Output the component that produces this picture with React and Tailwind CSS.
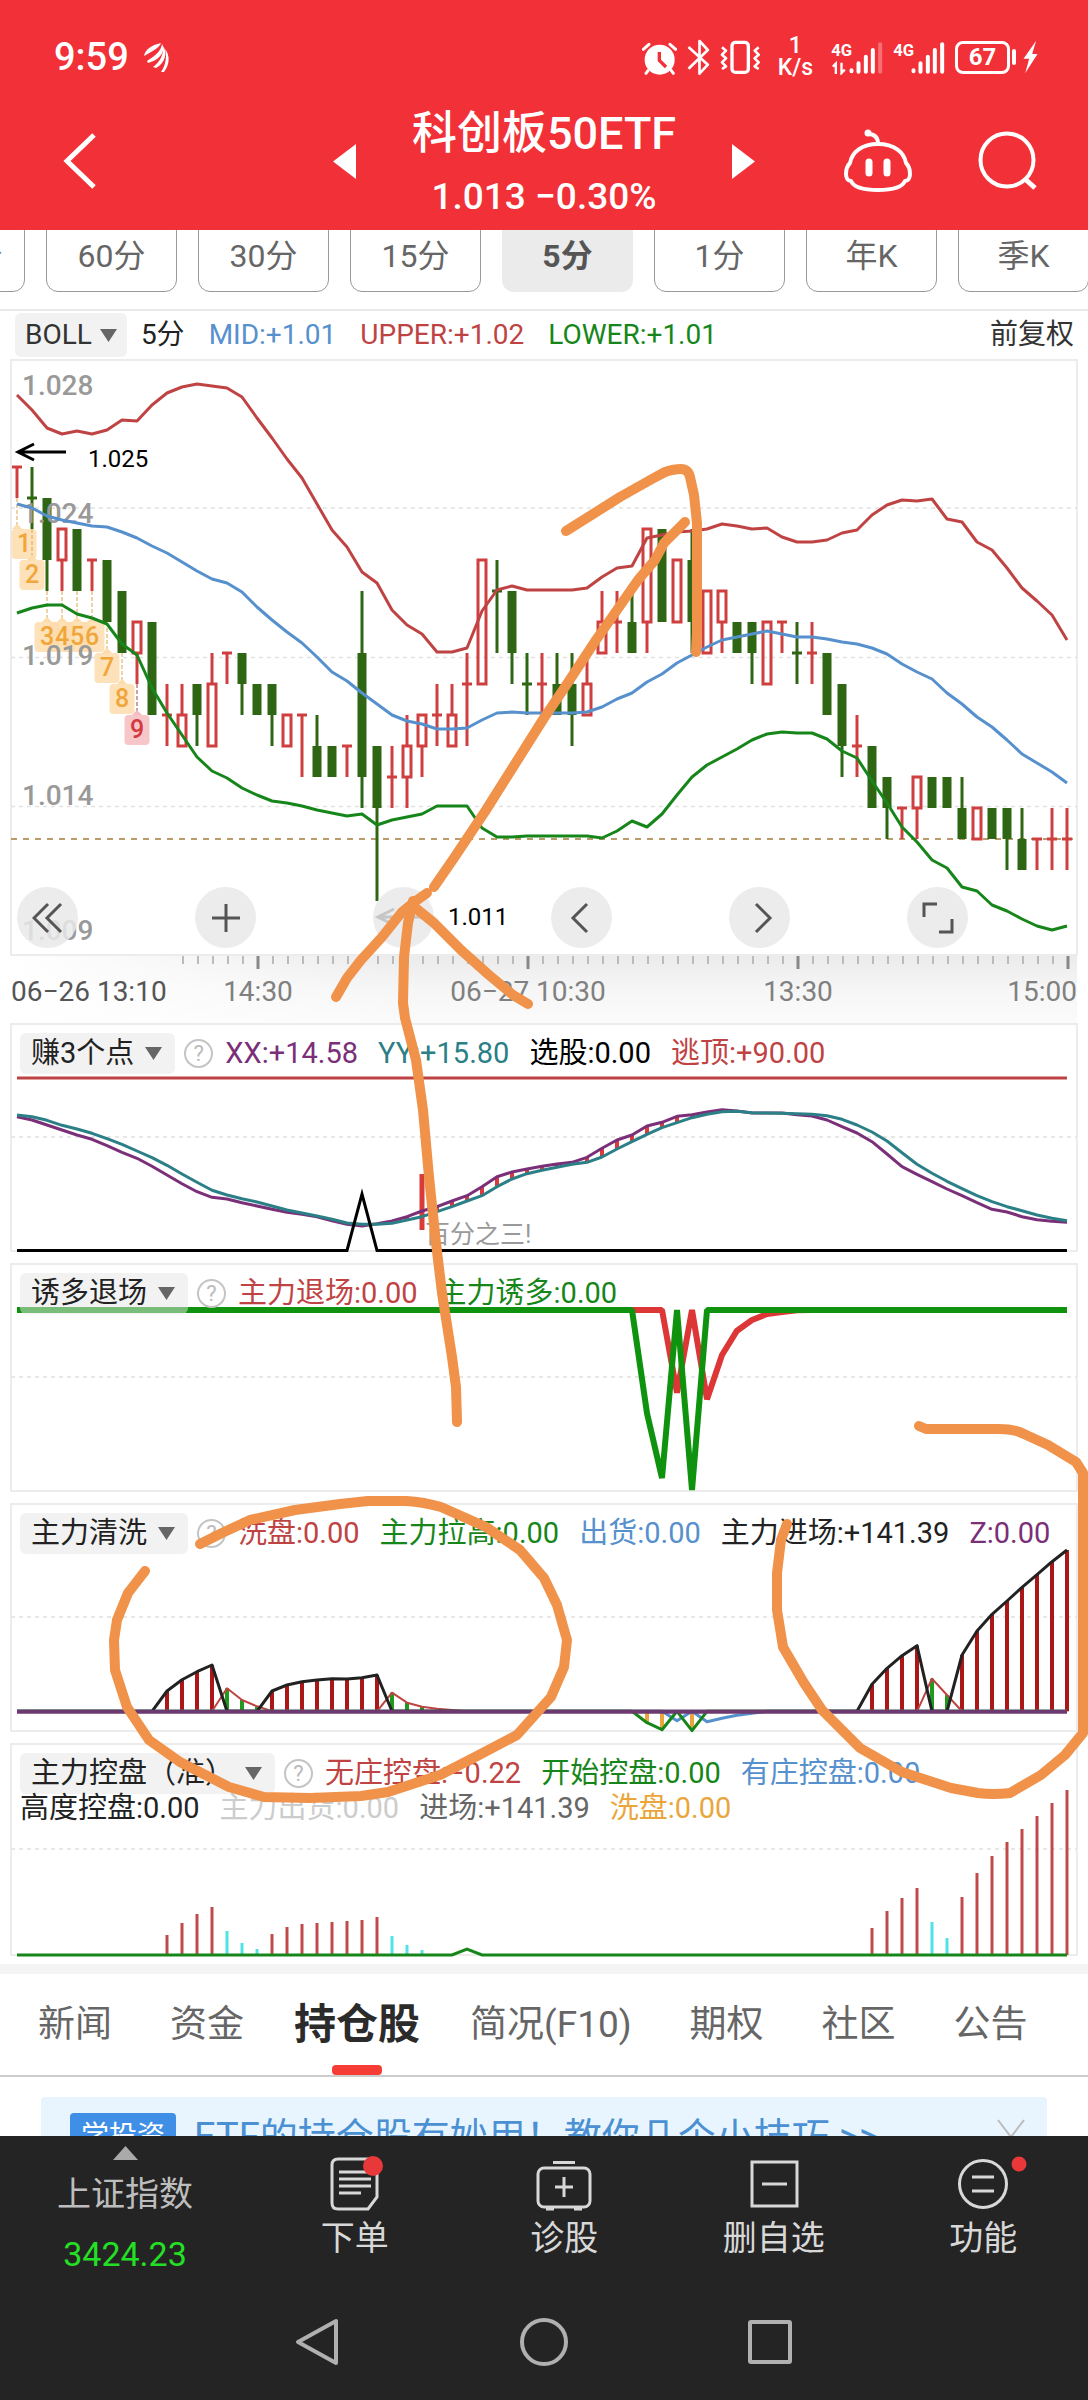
const RED = "#c04343";
const UP = "#cf3f3f";
const DOWN = "#2f6614";
const GREEN = "#17861a";
const BLUE = "#5690cd";
const PEN = "#f0924a";

// x of the i-th five minute bar
const barX = (i) => 17 + i * 15;
// y of a price, counted in ticks of 0.001 below the first high
const tickY = (n) => 467 + n * 31;

const toPoints = (values, scale = (v) => v) =>
  values.map((v, i) => `${barX(i)},${scale(v).toFixed(1)}`).join(" ");

// [up, high, bodyTop, bodyBottom, low]
const candles = [
  [1, 0, 0, 0, 1], [0, 0, 1, 1, 2], [0, 1, 1, 3, 4], [1, 2, 2, 3, 4], [0, 2, 2, 4, 4],
  [1, 3, 3, 3, 4], [0, 3, 3, 5, 5], [0, 4, 4, 6, 6], [1, 5, 5, 6, 7], [0, 5, 5, 8, 8],
  [1, 7, 8, 8, 9], [1, 7, 8, 9, 9], [0, 7, 7, 8, 9], [1, 6, 7, 9, 9], [1, 6, 6, 6, 7],
  [0, 6, 6, 7, 8], [0, 7, 7, 8, 8], [0, 7, 7, 8, 9], [1, 8, 8, 9, 9], [1, 8, 8, 8, 10],
  [0, 8, 9, 10, 10], [0, 9, 9, 10, 10], [1, 9, 9, 9, 10], [0, 4, 6, 10, 11], [0, 9, 9, 11, 14],
  [1, 9, 10, 10, 11], [1, 8, 9, 10, 11], [1, 8, 8, 9, 10], [1, 7, 8, 8, 9], [1, 7, 8, 9, 9],
  [1, 6, 7, 7, 9], [1, 3, 3, 7, 7], [0, 3, 4, 4, 6], [0, 4, 4, 6, 7], [0, 6, 7, 7, 8],
  [1, 6, 7, 7, 8], [0, 6, 7, 8, 8], [0, 6, 7, 8, 9], [1, 6, 7, 8, 8], [1, 4, 5, 6, 6],
  [1, 4, 5, 5, 6], [0, 4, 5, 6, 6], [1, 2, 2, 5, 6], [0, 2, 2, 5, 5], [1, 3, 3, 5, 5],
  [0, 2, 3, 5, 6], [1, 4, 4, 6, 6], [1, 4, 4, 5, 6], [0, 5, 5, 6, 6], [0, 5, 5, 6, 7],
  [1, 5, 5, 7, 7], [1, 5, 5, 5, 6], [0, 5, 6, 6, 7], [1, 5, 6, 6, 7], [0, 6, 6, 8, 8],
  [0, 7, 7, 9, 10], [1, 8, 9, 9, 10], [0, 9, 9, 11, 11], [0, 10, 10, 11, 12], [1, 11, 11, 11, 12],
  [1, 10, 10, 11, 12], [0, 10, 10, 11, 11], [0, 10, 10, 11, 11], [0, 10, 11, 12, 12], [1, 11, 11, 12, 12],
  [0, 11, 11, 12, 12], [0, 11, 11, 12, 13], [0, 11, 12, 13, 13], [1, 12, 12, 12, 13], [1, 11, 12, 12, 13],
  [1, 11, 12, 12, 13],
];

const upper = [
  395, 410, 428, 434, 431, 434, 430, 420, 421, 405, 393, 387, 384, 386, 388, 397, 418, 438, 459, 478,
  504, 530, 547, 572, 583, 610, 625, 634, 652, 652, 648, 611, 590, 586, 590, 590, 590, 590, 588, 577,
  568, 566, 538, 535, 532, 531, 529, 524, 526, 529, 528, 537, 542, 542, 540, 533, 530, 515, 505, 500,
  501, 499, 519, 522, 542, 550, 568, 588, 601, 615, 640,
];

const mid = [
  504, 508, 516, 520, 523, 526, 527, 532, 538, 546, 553, 562, 571, 579, 583, 592, 607, 620, 632, 643,
  657, 672, 681, 693, 704, 715, 721, 724, 729, 729, 728, 720, 713, 712, 713, 713, 713, 713, 712, 707,
  699, 693, 682, 674, 663, 655, 647, 640, 637, 634, 631, 634, 637, 637, 639, 642, 644, 648, 654, 664,
  672, 679, 693, 704, 717, 727, 740, 754, 763, 772, 783,
];

const lower = [
  613, 608, 605, 605, 614, 618, 624, 644, 655, 688, 713, 735, 757, 771, 778, 788, 795, 801, 803, 806,
  810, 813, 816, 814, 825, 820, 817, 814, 806, 806, 806, 828, 837, 837, 836, 836, 836, 836, 836, 838,
  831, 821, 827, 814, 795, 777, 765, 757, 749, 740, 734, 732, 733, 733, 739, 751, 758, 781, 803, 827,
  842, 860, 868, 887, 891, 905, 911, 919, 926, 930, 926,
];

const xx = [
  320, 330, 345, 360, 375, 388, 407, 427, 445, 469, 495, 521, 545, 562, 567, 578, 588, 598, 607, 613,
  620, 632, 643, 648, 641, 633, 620, 603, 590, 573, 557, 530, 500, 486, 477, 469, 462, 457, 442, 415,
  390, 375, 348, 337, 319, 314, 306, 299, 303, 309, 309, 309, 314, 318, 330, 350, 369, 395, 432, 470,
  493, 515, 537, 557, 578, 598, 606, 620, 629, 634, 637,
];

const yy = [
  315, 320, 331, 346, 357, 370, 386, 403, 423, 443, 466, 492, 517, 541, 555, 566, 576, 588, 600, 609,
  618, 628, 639, 643, 643, 640, 630, 620, 605, 590, 573, 557, 530, 507, 491, 481, 472, 463, 457, 441,
  417, 395, 373, 353, 338, 323, 313, 305, 304, 308, 309, 310, 311, 313, 317, 328, 345, 366, 393, 428,
  463, 490, 514, 536, 557, 575, 590, 602, 615, 625, 632,
];

const third = (base) => (v) => (v - base) / 3;

// sparse series: every bar sits on the base line unless it is listed
const sparse = (base, entries) =>
  Array.from({ length: 71 }, (_, i) => (entries[i] === undefined ? base : entries[i]));

const entering = {
  10: 603, 11: 569, 12: 545, 13: 525, 17: 603, 18: 585, 19: 575, 20: 570, 21: 566, 22: 567, 23: 563, 24: 555,
  57: 583, 58: 535, 59: 497, 60: 467, 63: 495, 64: 423, 65: 373, 66: 333, 67: 292, 68: 254, 69: 215, 70: 180,
};
const washing = { 14: 595, 15: 630, 16: 649, 25: 608, 26: 638, 27: 650, 61: 566, 62: 615 };

const controlUp = {
  10: 600, 11: 564, 12: 537, 13: 516, 17: 597, 18: 576, 19: 567, 20: 564, 21: 561, 22: 558, 23: 555, 24: 546,
  57: 579, 58: 528, 59: 489, 60: 459, 63: 486, 64: 414, 65: 363, 66: 321, 67: 282, 68: 243, 69: 204, 70: 165,
};
const controlWash = { 14: 588, 15: 624, 16: 642, 25: 603, 26: 630, 27: 645, 61: 561, 62: 609 };

const tags = [
  { n: 1, x: 24, y: 529, from: 498, at: 17 },
  { n: 2, x: 32, y: 560, from: 529, at: 32 },
  { n: 3, x: 47, y: 622, from: 591, at: 47 },
  { n: 4, x: 62, y: 622, from: 591, at: 62 },
  { n: 5, x: 77, y: 622, from: 591, at: 77 },
  { n: 6, x: 92, y: 622, from: 591, at: 92 },
  { n: 7, x: 107, y: 653, from: 622, at: 107 },
  { n: 8, x: 122, y: 684, from: 653, at: 122 },
  { n: 9, x: 137, y: 715, from: 684, at: 137 },
];

const Candle = ({ index, data }) => {
  const [up, high, top, bottom, low] = data;
  const x = barX(index);
  const color = up ? UP : DOWN;
  const flat = top === bottom;
  return (
    <g stroke={color} fill="none">
      {high < top && <path d={`M${x} ${tickY(high)}V${tickY(top)}`} strokeWidth="3" />}
      {low > bottom && <path d={`M${x} ${tickY(bottom)}V${tickY(low)}`} strokeWidth="3" />}
      {flat && <path d={`M${x - 5} ${tickY(top)}h10`} strokeWidth="3" />}
      {!flat && up === 1 && (
        <rect x={x - 4} y={tickY(top)} width="8" height={tickY(bottom) - tickY(top)} strokeWidth="3" />
      )}
      {!flat && up === 0 && (
        <rect x={x - 4.5} y={tickY(top)} width="9" height={tickY(bottom) - tickY(top)} fill={color} stroke="none" />
      )}
    </g>
  );
};

const Caret = () => (
  <svg viewBox="0 0 17 13" className="h-[13px] w-[17px] shrink-0" aria-hidden="true">
    <path d="M0 0h17L8.500 13z" fill="#666" />
  </svg>
);

const AlarmIcon = () => (
  <svg viewBox="30 42 105 105" className="size-[35px]" aria-hidden="true">
    <circle cx="83" cy="101" r="45" fill="#fff" />
    <path d="M34 70l17-15M131 70l-17-15M48 134l-6 8M118 134l6 8" stroke="#fff" strokeWidth="9" strokeLinecap="round" />
    <path d="M82 78v25l20 20" fill="none" stroke="#f23037" strokeWidth="10" />
  </svg>
);

const BluetoothIcon = () => (
  <svg viewBox="165 42 68 108" className="h-[36px] w-[23px]" aria-hidden="true">
    <path d="M169 66l58 53-25 27V48l25 27-58 56" fill="none" stroke="#fff" strokeWidth="8" strokeLinejoin="round" />
  </svg>
);

const VibrateIcon = () => (
  <svg viewBox="262 45 120 105" className="h-[35px] w-10" aria-hidden="true">
    <g fill="none" stroke="#fff" strokeWidth="8" strokeLinejoin="round">
      <rect x="298" y="52" width="49" height="90" rx="10" strokeWidth="10" />
      <path d="M268 67l12 10-12 12 12 11-12 12 12 12-12 8M378 67l-12 10 12 12-12 11 12 12-12 12 12 8" />
    </g>
  </svg>
);

const SignalIcon = ({ weak }) => (
  <svg viewBox="594 40 155 105" className="h-[35px] w-[52px]" aria-hidden="true">
    <text x="594" y="89" fontSize="50" fontWeight="700" fill="#fff" fontFamily="Roboto">4G</text>
    <g stroke="#fff" strokeWidth="12" strokeLinecap="round">
      <path d="M655 131v3M676 110v25M698 90v45M719 70v65" />
      <path d="M741 53v82" opacity={weak ? 0.3 : 1} />
    </g>
    {weak && <path d="M599 120l9-9v31M625 108v31l10-10" fill="none" stroke="#fff" strokeWidth="7" />}
  </svg>
);

const BoltIcon = () => (
  <svg viewBox="1178 46 44 102" className="ml-[-3px] h-[34px] w-[15px]" aria-hidden="true">
    <path d="M1217 48l-38 54h17l-12 44 37-58h-16z" fill="#fff" />
  </svg>
);

const StatusBar = () => (
  <div className="flex h-[92px] items-center justify-between pt-[22px] pr-[50px] pl-[54px] text-white">
    <div className="flex items-center gap-3.5">
      <span className="text-[38px] leading-[44px] font-medium">9:59</span>
      <svg viewBox="0 0 26 30" className="h-[30px] w-[26px]" fill="#fff" aria-hidden="true">
        <path d="M1 14C2 8 8 3 18 1C16 6 10 9 1 14z" />
        <path d="M4 19C12 14 18 9 19 2C23 9 17 18 5 21z" />
        <path d="M10 25C17 20 21 12 20 4C25 11 22 21 13 26z" />
        <path d="M18 30C23 23 24 14 22 7C27 13 27 22 21 30z" />
      </svg>
    </div>
    <div className="flex items-center gap-[10px]">
      <AlarmIcon />
      <BluetoothIcon />
      <VibrateIcon />
      <div className="mx-2 text-center text-[23px] leading-[22px] font-medium">
        <div>1</div>
        <div>K/s</div>
      </div>
      <SignalIcon weak />
      <SignalIcon />
      <div className="flex items-center gap-0.5">
        <span className="flex h-[33px] w-[55px] items-center justify-center rounded-[8px] border-[3px] border-white text-[24px] leading-none font-bold">
          67
        </span>
        <span className="h-4 w-1 rounded-sm bg-white" />
      </div>
      <BoltIcon />
    </div>
  </div>
);

const TitleBar = () => (
  <div className="grid h-[138px] grid-cols-[1fr_422px_1fr] items-center text-white">
    <button aria-label="返回" className="ml-[62px] w-9">
      <svg viewBox="0 0 36 56" className="h-14 w-9">
        <path d="M32 2L5 28l27 26" fill="none" stroke="#fff" strokeWidth="5" />
      </svg>
    </button>
    <div className="flex items-center justify-between">
      <button aria-label="上一个">
        <svg viewBox="0 0 23 35" className="h-[35px] w-[23px]"><path d="M23 0v35L0 17.500z" fill="#fff" /></svg>
      </button>
      <div className="flex flex-col gap-2 pt-1 text-center">
        <h1 className="text-[45px] leading-[60px] font-medium">科创板50ETF</h1>
        <p className="text-[37px] leading-[50px] font-medium">1.013 −0.30%</p>
      </div>
      <button aria-label="下一个">
        <svg viewBox="0 0 23 35" className="h-[35px] w-[23px]"><path d="M0 0v35l23-17.500z" fill="#fff" /></svg>
      </button>
    </div>
    <div className="flex items-center justify-end gap-[66px] pr-[50px]">
      <button aria-label="智能助手">
        <svg viewBox="0 0 68 64" className="h-16 w-[68px]" fill="none" stroke="#fff" strokeWidth="4" strokeLinejoin="round">
          <path d="M34 15C18 15 8 23 6 34C3 37 2 41 2 45C2 49 4 52 7 52C10 59 20 61 34 61S58 59 61 52C64 52 66 49 66 45C66 41 65 37 62 34C60 23 50 15 34 15z" />
          <path d="M34 15C34 8 30 5 24 5" />
          <circle cx="24" cy="4" r="1.500" fill="#fff" />
          <path d="M25 33v11M43 33v11" strokeWidth="7" strokeLinecap="round" />
        </svg>
      </button>
      <button aria-label="搜索">
        <svg viewBox="0 0 60 60" className="size-[60px]" fill="none" stroke="#fff" strokeWidth="4">
          <circle cx="29" cy="29" r="26.500" />
          <path d="M47 48l10 9" strokeWidth="5" />
        </svg>
      </button>
    </div>
  </div>
);

const periods = ["120分", "60分", "30分", "15分", "5分", "1分", "年K", "季K"];

const PeriodTabs = () => (
  <nav className="flex h-[81px] gap-[21px] overflow-hidden border-b-2 border-[#e8e8e8]">
    {periods.map((name) => (
      <button
        key={name}
        className={
          name === "5分"
            ? "-mt-[11px] h-[73px] w-[131px] shrink-0 rounded-xl bg-[#ebebeb] text-[32px] font-bold text-[#555] first:-ml-[106px]"
            : "-mt-[11px] h-[73px] w-[131px] shrink-0 rounded-xl border border-[#999] text-[32px] text-[#666] first:-ml-[106px]"
        }
      >
        {name}
      </button>
    ))}
  </nav>
);

const BollHeader = () => (
  <div className="flex h-12 items-center pr-[14px] pl-[15px] text-[28px] leading-[48px] whitespace-nowrap">
    <button className="flex h-11 items-center gap-2 rounded-md bg-[#f2f2f2] px-[10px] text-[#333]">
      BOLL <Caret />
    </button>
    <div className="ml-3.5 flex gap-[24px]">
      <span className="text-[#222]">5分</span>
      <span className="text-[#5690cd]">MID:+1.01</span>
      <span className="text-[#c04343]">UPPER:+1.02</span>
      <span className="text-[#17861a]">LOWER:+1.01</span>
    </div>
    <span className="ml-auto text-[#333]">前复权</span>
  </div>
);

const ChartButton = ({ label, d }) => (
  <button aria-label={label} className="flex size-[61px] items-center justify-center rounded-full bg-[#e9e9e9]/85">
    <svg viewBox="0 0 32 32" className="size-8" fill="none" stroke="#555" strokeWidth="3">
      <path d={d} />
    </svg>
  </button>
);

const PriceChart = () => (
  <section className="grid">
    <svg viewBox="0 359 1088 664" className="w-full [grid-area:1/1]">
      <defs>
        <linearGradient id="axisShade" x1="0" y1="0" x2="0" y2="1">
          <stop offset="0" stopColor="#ebebeb" />
          <stop offset="0.500" stopColor="#f6f6f6" />
          <stop offset="1" stopColor="#fbfbfb" />
        </linearGradient>
        <linearGradient id="axisFade">
          <stop offset="0" stopColor="#fff" />
          <stop offset="1" stopColor="#fff" stopOpacity="0" />
        </linearGradient>
      </defs>
      <rect x="11" y="956" width="1066" height="67" fill="url(#axisShade)" />
      <rect x="11" y="956" width="400" height="67" fill="url(#axisFade)" />
      <rect x="11" y="360" width="1066" height="595" fill="none" stroke="#ececec" strokeWidth="2" />
      <path d="M11 508H1077M11 657.500H1077M11 806.500H1077" stroke="#e2e2e2" strokeWidth="1.500" strokeDasharray="4 4" />
      <path d="M11 839H1077" stroke="#b89c6c" strokeWidth="2" strokeDasharray="6 6" />

      {tags.map((t) => (
        <g key={t.n}>
          <path d={`M${t.at} ${t.from}V${t.y}`} stroke={t.n === 9 ? "#8a4a4a" : "#dba54e"} strokeDasharray="4 2" />
          <path d={`M${t.at - 5} ${t.y}l5 -5l5 5z`} fill={t.n === 9 ? "#f5bcbf" : "#fddcab"} />
          <rect x={t.x - 12.5} y={t.y} width="25" height="30" rx="4" fill={t.n === 9 ? "#f5bcbf" : "#fddcab"} fillOpacity="0.850" />
        </g>
      ))}
      <g fontSize="25" fontWeight="500" textAnchor="middle">
        {tags.map((t) => (
          <text key={t.n} x={t.x} y={t.y + 23} fill={t.n === 9 ? "#d5383f" : "#f0a63a"}>{t.n}</text>
        ))}
      </g>

      {candles.map((data, i) => (
        <Candle key={i} index={i} data={data} />
      ))}

      <g fontSize="28" fill="#999" fontWeight="500">
        <text x="22" y="395">1.028</text>
        <text x="22" y="523">1.024</text>
        <text x="22" y="665">1.019</text>
        <text x="22" y="805">1.014</text>
        <text x="22" y="940">1.009</text>
      </g>
      <g fill="none" strokeWidth="3" strokeLinejoin="round">
        <polyline points={toPoints(upper)} stroke={RED} />
        <polyline points={toPoints(mid)} stroke={BLUE} />
        <polyline points={toPoints(lower)} stroke={GREEN} />
      </g>

      <path d="M66 452H18M34 444l-16 8 16 8" fill="none" stroke="#000" strokeWidth="3" />
      <text x="88" y="467" fontSize="24">1.025</text>
      <path d="M426 917H378M394 909l-16 8 16 8" fill="none" stroke="#000" strokeWidth="3" />
      <text x="448" y="925" fontSize="24">1.011</text>

      {Array.from({ length: 60 }, (_, k) => k + 11).map((i) =>
        i % 18 === 16 ? (
          <path key={i} d={`M${barX(i) + 1} 956v13`} stroke="#888" strokeWidth="3" />
        ) : (
          <path key={i} d={`M${barX(i) + 1} 956v8`} stroke="#bbb" strokeWidth="2" />
        )
      )}
      <g fontSize="28" fill="#808080" textAnchor="middle">
        <text x="11" y="1001" textAnchor="start" fill="#555">06−26 13:10</text>
        <text x="258" y="1001">14:30</text>
        <text x="528" y="1001">06−27 10:30</text>
        <text x="798" y="1001">13:30</text>
        <text x="1077" y="1001" textAnchor="end">15:00</text>
      </g>
    </svg>
    <div className="flex justify-between self-end pr-[120px] pb-[75px] pl-[17px] [grid-area:1/1]">
      <ChartButton label="快退" d="M16 2L2 16l14 14M29 2L15 16l14 14" />
      <ChartButton label="放大" d="M16 2v28M2 16h28" />
      <ChartButton label="缩小" d="" />
      <ChartButton label="左移" d="M21 2L7 16l14 14" />
      <ChartButton label="右移" d="M12 2l14 14-14 14" />
      <ChartButton label="全屏" d="M2 15V2h13M30 17v13H17" />
    </div>
  </section>
);

const Panel = ({ name, values, more, bottom = 228, height = 240, grid = 114, children }) => (
  <section className="grid">
    <svg viewBox={`0 0 1088 ${height}`} className="w-full [grid-area:1/1]">
      <rect x="11" y="1" width="1066" height={bottom - 1} fill="none" stroke="#ececec" strokeWidth="2" />
      <path d={`M11 ${grid}H1077`} stroke="#e6e6e6" strokeWidth="2" strokeDasharray="4 4" />
      {children}
    </svg>
    <div className="pt-[9px] pl-5 text-[29px] whitespace-nowrap [grid-area:1/1]">
      <div className="flex items-center leading-[43px]">
        <button className="flex h-[41px] items-center gap-[11px] rounded-md bg-[#e6e6e6]/50 pr-[13px] pl-[11px] text-[#222]">
          {name} <Caret />
        </button>
        <button
          aria-label="说明"
          className="ml-[9px] size-[29px] rounded-full border-2 border-[#c4c4c4] text-[22px] leading-[25px] text-[#bbb]"
        >
          ?
        </button>
        <div className="ml-3 flex gap-[20px]">{values}</div>
      </div>
      {more && <div className="-mt-1 flex gap-[20px] leading-[34px]">{more}</div>}
    </div>
  </section>
);

const ProfitPanel = () => {
  const y = third(39);
  return (
    <Panel
      name="赚3个点"
      values={
        <>
          <span className="text-[#7a2f78]">XX:+14.58</span>
          <span className="text-[#2b7f86]">YY:+15.80</span>
          <span className="text-black">选股:0.00</span>
          <span className="text-[#c04343]">逃顶:+90.00</span>
        </>
      }
    >
      <path d="M17 55H1067" stroke={RED} strokeWidth="3" />
      {xx.map((v, i) =>
        i > 24 && i < 47 ? (
          <path key={i} d={`M${barX(i)} ${y(v)}V${y(yy[i])}`} stroke="#d93a3a" strokeWidth="4" />
        ) : null
      )}
      <path d="M422 151v56" stroke="#d93a3a" strokeWidth="5" />
      <g fill="none" strokeWidth="3" strokeLinejoin="round">
        <polyline points={toPoints(xx, y)} stroke="#7a2f78" />
        <polyline points={toPoints(yy, y)} stroke="#2b7f86" />
        <path d="M17 227.500H347L362 171L377 227.500H1067" stroke="#000" strokeLinejoin="miter" />
      </g>
      <text x="425" y="220" fontSize="25" fill="#999">百分之三!</text>
    </Panel>
  );
};

const ExitPanel = () => {
  const y = third(9);
  const exit = sparse(150, { 44: 398, 46: 418, 47: 285, 48: 212, 49: 180, 50: 162, 51: 156, 52: 151 });
  const lure = sparse(150, { 42: 460, 43: 654, 45: 690 });
  return (
    <Panel
      name="诱多退场"
      values={
        <>
          <span className="text-[#c04343]">主力退场:0.00</span>
          <span className="text-[#17861a]">主力诱多:0.00</span>
        </>
      }
    >
      <g fill="none" strokeWidth="6" strokeLinejoin="bevel">
        <polyline points={toPoints(exit, y)} stroke="#dc3636" />
        <polyline points={toPoints(lure, y)} stroke="#0f930f" />
      </g>
    </Panel>
  );
};

const WashPanel = () => {
  const y = third(39);
  const base = y(664);
  return (
    <Panel
      name="主力清洗"
      values={
        <>
          <span className="text-[#c04343]">洗盘:0.00</span>
          <span className="text-[#17861a]">主力拉高:0.00</span>
          <span className="text-[#5690cd]">出货:0.00</span>
          <span className="text-[#222]">主力进场:+141.39</span>
          <span className="text-[#7a2f78]">Z:0.00</span>
        </>
      }
    >
      {Object.entries(entering).map(([i, v]) => (
        <path key={i} d={`M${barX(+i)} ${y(v)}V${base}`} stroke="#ab1717" strokeWidth="4" />
      ))}
      {Object.entries(washing).map(([i, v]) => (
        <path key={i} d={`M${barX(+i)} ${y(v)}V${base}`} stroke="#1f9a1f" strokeWidth="4" />
      ))}
      <path d={`M647 ${base}V219M662 ${base}V225M692 ${base}V226`} stroke="#eaa63c" strokeWidth="4" />
      <g fill="none" strokeWidth="2" strokeLinejoin="round">
        <polyline points={toPoints(sparse(664, { ...washing, 28: 656, 29: 660 }), y)} stroke={RED} />
        <polyline points={toPoints(sparse(664, { 44: 692, 46: 695, 47: 685, 48: 676, 49: 670 }), y)} stroke={BLUE} strokeWidth="3" />
        <polyline points={toPoints(sparse(664, { 42: 698, 43: 719, 45: 722 }), y)} stroke={GREEN} strokeWidth="3" />
        <polyline points={toPoints(sparse(664, entering), y)} stroke="#222" strokeWidth="3" />
      </g>
      <path d={`M17 ${base + 0.5}H1067`} stroke="#6d3a70" strokeWidth="4" />
    </Panel>
  );
};

const ControlPanel = () => {
  const y = third(24);
  return (
    <Panel
      name="主力控盘（准）"
      height={221}
      bottom={212}
      grid={106}
      values={
        <>
          <span className="text-[#c04343]">无庄控盘:−0.22</span>
          <span className="text-[#17861a]">开始控盘:0.00</span>
          <span className="text-[#5690cd]">有庄控盘:0.00</span>
        </>
      }
      more={
        <>
          <span className="text-[#222]">高度控盘:0.00</span>
          <span className="text-[#ccc]">主力出货:0.00</span>
          <span className="text-[#666]">进场:+141.39</span>
          <span className="text-[#eaa63c]">洗盘:0.00</span>
        </>
      }
    >
      {Object.entries(controlUp).map(([i, v]) => (
        <path key={i} d={`M${barX(+i)} ${y(v)}V212`} stroke="#c04a4a" strokeWidth="3" />
      ))}
      {Object.entries(controlWash).map(([i, v]) => (
        <path key={i} d={`M${barX(+i)} ${y(v)}V212`} stroke="#4fe3e6" strokeWidth="3" />
      ))}
      <polyline points={toPoints(sparse(660, { 30: 642 }), y)} fill="none" stroke={GREEN} strokeWidth="3" />
    </Panel>
  );
};

// freehand strokes drawn over the charts
const PenMarks = () => (
  <svg
    viewBox="0 359 1088 1605"
    className="pointer-events-none absolute inset-x-0 top-0 w-full"
    fill="none"
    stroke={PEN}
    strokeWidth="10"
    strokeLinecap="round"
    strokeLinejoin="round"
    aria-hidden="true"
  >
    <path d="M566 531L601 509L620 497L652 479L665 472Q674 469 681 469Q688 469 690 477L694 495L697 523V633L696 652" />
    <path d="M685 522L664 543L655 560L638 580L596 640L563 690L544 718L486 810L468 837L454 858L434 887" />
    <path d="M427 893L413 903L402 912L382 937L361 960L347 978L336 997" />
    <path d="M413 906L434 923L461 950L489 975L513 995L528 1004" />
    <path d="M413 901L408 923L404 957L403 1003L405 1018L416 1060L423 1110L429 1177L436 1243L442 1293L452 1357L456 1387L457 1422" />
    <path d="M200 1544L222 1533L250 1520L295 1510L340 1504L368 1501H406Q424 1502 441 1507L486 1527L520 1550L544 1578L557 1605L567 1640L564 1667L551 1697L517 1735L479 1755L440 1775L388 1792L361 1796L310 1798L264 1797L229 1787L180 1762L149 1740L127 1707L115 1670L114 1640L117 1620L128 1593L145 1571" />
    <path d="M919 1426L926 1429H999Q1014 1429 1024 1434L1048 1445L1076 1462L1083 1473V1733L1065 1755L1041 1775L1010 1793Q993 1795 978 1793L951 1788L902 1772L860 1748L822 1710L804 1683L783 1647L777 1610V1573L781 1540L787 1524" />
  </svg>
);

const newsTabs = ["新闻", "资金", "持仓股", "简况(F10)", "期权", "社区", "公告"];

const NewsTabs = () => (
  <nav className="flex h-[113px] gap-[58px] overflow-hidden border-t-[10px] border-b-2 border-t-[#f4f4f4] border-b-[#ccc] pl-[38px] text-[37px] whitespace-nowrap text-[#666]">
    {newsTabs.map((name) =>
      name === "持仓股" ? (
        <button key={name} className="relative -mx-2 shrink-0 text-[42px] font-bold text-[#2b2b2b]">
          {name}
          <span className="absolute bottom-0 left-1/2 h-[10px] w-[50px] -translate-x-1/2 rounded-[4px] bg-[#f53d35]" />
        </button>
      ) : (
        <button key={name} className="shrink-0">{name}</button>
      )
    )}
  </nav>
);

const Banner = () => (
  <div className="h-[59px] overflow-hidden px-[41px] pt-5">
    <div className="flex h-20 items-center gap-[18px] rounded-sm bg-[#e8f5fe] pr-[22px] pl-[29px]">
      <span className="rounded-[4px] bg-[#3f8fe6] px-[11px] text-[28px] leading-[48px] text-white">学投资</span>
      <a href="#etf" className="text-[38px] leading-[48px] whitespace-nowrap text-[#4a90d2]">
        ETF的持仓股有妙用！教你几个小技巧 &gt;&gt;
      </a>
      <button aria-label="关闭" className="ml-auto">
        <svg viewBox="0 0 28 36" className="h-9 w-7" stroke="#bbb" strokeWidth="2">
          <path d="M1 1l26 34M27 1L1 35" />
        </svg>
      </button>
    </div>
  </div>
);

const NavItem = ({ label, children }) => (
  <button className="flex flex-col items-center gap-1 pt-5 text-[34px] leading-[44px] text-[#d8d8d8]">
    <svg viewBox="0 0 56 56" className="size-14 overflow-visible" fill="none" stroke="#d8d8d8" strokeWidth="3">
      {children}
    </svg>
    <span>{label}</span>
  </button>
);

const BottomNav = () => (
  <footer className="bg-[#242424]">
    <nav className="grid h-[164px] grid-cols-[250px_1fr_1fr_1fr_1fr]">
      <button className="flex flex-col items-center pt-[10px] text-[34px] leading-[44px] text-[#bdbdbd]">
        <svg viewBox="0 0 25 14" className="h-3.5 w-[25px]"><path d="M12.500 0L25 14H0z" fill="#aaa" /></svg>
        <span className="mt-3">上证指数</span>
        <span className="mt-4 text-[#24e024]">3424.23</span>
      </button>
      <NavItem label="下单">
        <path d="M11 3h32q7 0 7 6v32l-9 12H11q-6 0-6-6V9q0-6 6-6z" />
        <path d="M12 16h30M12 23h32M12 30h32M12 37h22" />
        <circle cx="46" cy="10" r="10" fill="#e8383a" stroke="none" />
      </NavItem>
      <NavItem label="诊股">
        <path d="M17 6.500h22M28 21v20M19 31h18M10 53h8M38 53h8" />
        <rect x="2" y="12" width="52" height="39" rx="6" />
      </NavItem>
      <NavItem label="删自选">
        <rect x="6" y="6" width="45" height="44" />
        <path d="M16 28h25" />
      </NavItem>
      <NavItem label="功能">
        <circle cx="28" cy="28" r="23.500" />
        <path d="M17 21h22M17 35h22" />
        <circle cx="64" cy="8" r="7.500" fill="#e8383a" stroke="none" />
      </NavItem>
    </nav>
    <div className="flex h-[100px] items-center justify-center gap-[178px] pb-[17px]">
      <button aria-label="后退">
        <svg viewBox="0 0 48 48" className="size-12" fill="none" stroke="#b0b0b0" strokeWidth="4" strokeLinejoin="round">
          <path d="M42 3v42L4 24z" />
        </svg>
      </button>
      <button aria-label="主屏幕">
        <svg viewBox="0 0 48 48" className="size-12" fill="none" stroke="#b0b0b0" strokeWidth="4">
          <circle cx="24" cy="24" r="22" />
        </svg>
      </button>
      <button aria-label="最近任务">
        <svg viewBox="0 0 48 48" className="size-12" fill="none" stroke="#b0b0b0" strokeWidth="4">
          <rect x="4" y="4" width="40" height="40" rx="1" />
        </svg>
      </button>
    </div>
  </footer>
);

const App = () => {
  return (
    <div className="overflow-hidden bg-white [font-family:Roboto,'Noto_Sans_CJK_SC',sans-serif]">
      <header className="bg-[#f23037]">
        <StatusBar />
        <TitleBar />
      </header>
      <PeriodTabs />
      <BollHeader />
      <main className="relative">
        <PriceChart />
        <ProfitPanel />
        <ExitPanel />
        <WashPanel />
        <ControlPanel />
        <PenMarks />
      </main>
      <NewsTabs />
      <Banner />
      <BottomNav />
    </div>
  );
};

export default App;
